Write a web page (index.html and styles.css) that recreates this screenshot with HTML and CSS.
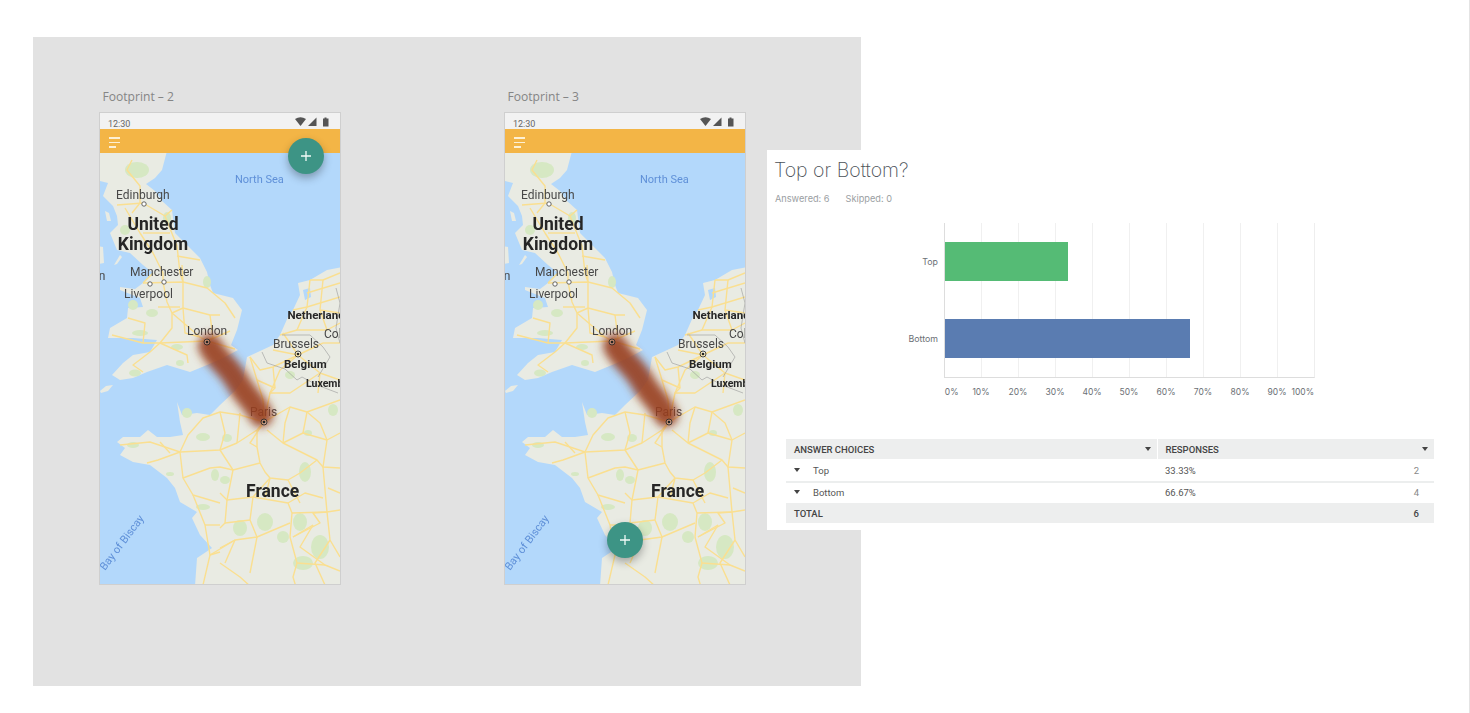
FILE: index.html
```html
<!DOCTYPE html>
<html lang="en">
<head>
    <meta charset="UTF-8">
    <meta name="viewport" content="width=device-width, initial-scale=1.0">
    <title>Footprint</title>
    <link rel="stylesheet" href="styles.css">
</head>
<body>
    <!-- map artwork, used by both phones -->
    <svg class="map-defs" aria-hidden="true">
        <defs>
            <filter id="trailBlur" x="-80%" y="-60%" width="260%" height="220%">
                <feGaussianBlur stdDeviation="4.5"/>
            </filter>
        </defs>
        <symbol id="map" viewBox="0 0 240 431">
            <rect class="sea" width="240" height="431"/>
            <g class="land">
                <!-- Britain -->
                <path d="M-2 -2 L67 -2 L62 17 L55 25 L46 31 L55 38 L62 48 L72 57 L75 80 L88 93 L100 105 L107 119 L110 132 L113 140 L133 145 L142 157 L137 177 L131 192 L138 197 L123 205 L107 212 L90 219 L67 212 L47 219 L33 225 L20 227 L12 222 L23 210 L33 202 L50 199 L57 187 L33 185 L8 185 L10 175 L27 165 L28 155 L43 154 L40 145 L20 137 L20 134 L35 136 L43 130 L53 120 L43 112 L30 100 L17 97 L10 80 L18 72 L17 63 L13 53 L3 43 L8 30 L0 28 Z"/>
                <path d="M-2 93 L3 94 L4 110 L-2 111 Z"/>
                <path d="M14 112 L20 102 L22 104 L17 111 Z"/>
                <path d="M5 58 L9 60 L11 68 L7 68 Z"/>
                <path d="M0 238 L6 233 L13 232 L8 238 L1 240 Z"/>
                <!-- Continent -->
                <path fill-rule="evenodd" d="M242 114 L227 117 L210 127 L198 130 L200 142 L193 157 L188 164 L180 182 L173 192 L147 204 L143 227 L135 238 L120 252 L110 262 L97 260 L82 262 L77 249 L80 269 L83 282 L70 284 L57 284 L48 277 L40 284 L23 284 L17 289 L25 295 L20 302 L33 309 L50 312 L67 325 L75 335 L80 349 L97 359 L92 365 L100 382 L112 395 L97 405 L95 433 L242 433 Z M203 137 L210 135 L211 144 L205 147 Z"/>
            </g>
            <g class="parks">
                <ellipse cx="37" cy="17" rx="12" ry="8"/>
                <ellipse cx="67" cy="65" rx="4" ry="6"/>
                <ellipse cx="25" cy="77" rx="5" ry="5"/>
                <ellipse cx="52" cy="160" rx="6" ry="4"/>
                <ellipse cx="33" cy="152" rx="5" ry="5"/>
                <ellipse cx="40" cy="180" rx="8" ry="3"/>
                <ellipse cx="107" cy="129" rx="4" ry="6"/>
                <ellipse cx="35" cy="220" rx="6" ry="3.5"/>
                <ellipse cx="80" cy="210" rx="4" ry="3"/>
                <ellipse cx="77" cy="194" rx="6" ry="3"/>
                <ellipse cx="205" cy="319" rx="6" ry="10"/>
                <ellipse cx="140" cy="375" rx="7" ry="8"/>
                <ellipse cx="165" cy="369" rx="8" ry="9"/>
                <ellipse cx="200" cy="369" rx="7" ry="9"/>
                <ellipse cx="183" cy="384" rx="6" ry="6"/>
                <ellipse cx="220" cy="394" rx="9" ry="12"/>
                <ellipse cx="203" cy="410" rx="10" ry="7"/>
                <ellipse cx="125" cy="327" rx="5" ry="4"/>
                <ellipse cx="208" cy="280" rx="4" ry="3"/>
                <ellipse cx="233" cy="257" rx="5" ry="6"/>
                <ellipse cx="127" cy="285" rx="5" ry="4"/>
                <ellipse cx="103" cy="284" rx="7" ry="4"/>
                <ellipse cx="115" cy="322" rx="4" ry="6"/>
                <ellipse cx="87" cy="260" rx="5" ry="5"/>
                <ellipse cx="103" cy="354" rx="7" ry="3"/>
                <ellipse cx="33" cy="292" rx="6" ry="3"/>
                <ellipse cx="70" cy="321" rx="4" ry="2"/>
                <ellipse cx="190" cy="222" rx="5" ry="4"/>
            </g>
            <g class="roads">
                <!-- Britain -->
                <path d="M32 7 L27 17 L40 33 L40 50"/>
                <path d="M17 52 L43 50 L65 63 L77 93 L80 120 L83 129 L83 155 L72 160"/>
                <path d="M25 55 L40 80 L53 100 L63 120 L63 129 L67 149 L72 160 L72 175 L60 190"/>
                <path d="M43 80 L70 80"/>
                <path d="M77 103 L100 107"/>
                <path d="M43 130 L83 129 L107 135"/>
                <path d="M58 154 L80 154"/>
                <path d="M83 155 L110 162 L120 162"/>
                <path d="M72 160 L100 184 L107 188"/>
                <path d="M12 182 L43 190 L60 190 L107 188"/>
                <path d="M60 190 L87 202 L88 210"/>
                <path d="M60 190 L50 199 L33 212 L43 219"/>
                <path d="M107 188 L130 178"/>
                <path d="M107 188 L135 196"/>
                <path d="M82 112 L83 129"/>
                <path d="M107 135 L125 150 L135 165"/>
                <path d="M40 50 L32 60"/>
                <path d="M65 63 L72 57"/>
                <path d="M53 120 L43 130"/>
                <path d="M83 155 L85 180 L100 184"/>
                <path d="M110 162 L113 185 L107 188"/>
                <path d="M43 190 L45 170 L28 165"/>
                <!-- Low countries -->
                <path d="M210 127 L207 154 L197 177"/>
                <path d="M207 140 L240 130"/>
                <path d="M207 154 L240 144"/>
                <path d="M223 127 L220 157 L227 177"/>
                <path d="M180 182 L197 177 L227 177 L240 170"/>
                <path d="M173 197 L198 202 L183 180"/>
                <path d="M198 202 L173 214 L160 217 L150 204"/>
                <path d="M198 202 L223 190"/>
                <path d="M198 202 L220 220 L240 227"/>
                <path d="M198 202 L180 217 L170 240 L164 269"/>
                <path d="M150 204 L157 227 L163 247 L164 269"/>
                <path d="M193 157 L207 154"/>
                <path d="M210 127 L223 127 L240 120"/>
                <path d="M220 157 L240 160"/>
                <path d="M223 190 L240 190"/>
                <path d="M220 220 L218 240"/>
                <path d="M173 214 L175 235 L170 240 L190 240 L220 220"/>
                <path d="M157 227 L175 235"/>
                <!-- West of France -->
                <path d="M80 299 L50 289 L20 292"/>
                <path d="M80 299 L120 297 L137 290 L157 277 L164 269"/>
                <path d="M80 299 L58 307 L47 310"/>
                <path d="M80 299 L83 325 L93 342 L120 350"/>
                <path d="M80 299 L88 282 L103 265 L120 259 L140 262 L164 269"/>
                <path d="M83 325 L110 315 L120 314 L133 317"/>
                <path d="M93 342 L105 372 L110 402 L103 432"/>
                <path d="M110 402 L120 399"/>
                <path d="M105 372 L120 372"/>
                <path d="M60 289 L70 300"/>
                <path d="M120 259 L125 280 L120 297"/>
                <path d="M137 290 L140 260"/>
                <!-- Centre and east of France -->
                <path d="M157 277 L157 294 L160 310 L165 319 L170 325 L188 327"/>
                <path d="M120 297 L133 317 L160 310"/>
                <path d="M133 317 L127 347 L125 370 L120 375"/>
                <path d="M170 325 L153 344 L150 367 L157 384 L135 387 L120 395"/>
                <path d="M153 344 L188 350 L192 360 L190 384 L197 410 L193 424 L196 434"/>
                <path d="M157 384 L190 370"/>
                <path d="M192 360 L227 359 L240 357"/>
                <path d="M227 359 L213 360 L220 370 L193 384"/>
                <path d="M227 359 L223 314 L227 287 L240 280"/>
                <path d="M167 277 L183 290 L217 307 L223 314 L240 315"/>
                <path d="M183 290 L203 280 L227 287"/>
                <path d="M164 269 L190 254 L207 259 L240 247"/>
                <path d="M207 259 L203 280"/>
                <path d="M227 359 L230 387 L240 404"/>
                <path d="M213 372 L200 394 L225 412 L240 418"/>
                <path d="M120 410 L140 424 L150 433"/>
                <path d="M157 384 L150 420"/>
                <path d="M125 370 L150 367"/>
                <path d="M120 340 L127 347 L153 344"/>
                <path d="M170 325 L165 345"/>
                <path d="M188 327 L200 350"/>
                <path d="M188 350 L205 340 L223 345"/>
                <path d="M217 307 L200 320 L188 327"/>
                <path d="M227 287 L220 270 L207 259"/>
                <path d="M190 254 L185 270 L183 290"/>
                <path d="M164 269 L150 290 L157 294"/>
                <path d="M110 402 L135 387"/>
                <path d="M135 387 L125 410"/>
                <path d="M197 410 L225 412"/>
                <path d="M193 384 L213 372"/>
                <path d="M230 387 L215 410 L225 432"/>
                <path d="M240 340 L228 335"/>
            </g>
            <g class="borders">
                <path d="M162 199 L167 210 L185 216 L197 227 L202 224 L217 232 L238 240"/>
                <path d="M182 182 L197 182 L210 182 L223 194 L230 204 L224 214 L218 224"/>
                <path d="M236 135 L240 150 L236 175 L240 190"/>
            </g>
            <g class="labels">
                <text class="sea-label" x="135" y="30">North Sea</text>
                <text x="16" y="46">Edinburgh</text>
                <text class="country" x="53" y="77" text-anchor="middle">United</text>
                <text class="country" x="53" y="97" text-anchor="middle">Kingdom</text>
                <text x="30" y="123">Manchester</text>
                <text x="5.5" y="127" text-anchor="end">Dublin</text>
                <text x="24" y="145">Liverpool</text>
                <text x="87" y="182">London</text>
                <text class="region" x="187.5" y="165.5">Netherlands</text>
                <text x="224" y="185">Cologne</text>
                <text x="173" y="195">Brussels</text>
                <text class="region" x="184" y="215">Belgium</text>
                <text class="region small" x="206" y="234">Luxembourg</text>
                <text x="150" y="263">Paris</text>
                <text class="country" x="146" y="344">France</text>
                <text class="sea-label" transform="translate(5 418) rotate(-53)">Bay of Biscay</text>
            </g>
            <circle class="town" cx="44" cy="51" r="2.2"/>
            <circle class="town" cx="50" cy="131" r="2.2"/>
            <circle class="town" cx="64" cy="129" r="2.2"/>
            <path class="trail" d="M110 193 C116 206 128 212 137 228 S154 248 161 262" filter="url(#trailBlur)"/>
            <circle class="city" cx="107" cy="189" r="3"/>
            <circle class="city-dot" cx="107" cy="189" r="1.3"/>
            <circle class="city" cx="164" cy="269" r="3"/>
            <circle class="city-dot" cx="164" cy="269" r="1.3"/>
            <circle class="city" cx="198" cy="201" r="3"/>
            <circle class="city-dot" cx="198" cy="201" r="1.3"/>
        </symbol>
    </svg>

    <div class="artboard">
        <div class="screen">
            <div class="screen-name">Footprint – 2</div>
            <div class="phone">
                <div class="status-bar">
                    <span class="clock">12:30</span>
                    <svg class="status-icons" width="36" height="10" viewBox="0 0 36 10">
                        <path d="M0 2 Q5.5 -1.5 11 2 L5.5 9 Z"/>
                        <path d="M13 9 L21.500 .5 V9 Z"/>
                        <path d="M28 1.500 H29.500 V.5 H31.500 V1.500 H33.500 V9.500 H28 Z"/>
                    </svg>
                </div>
                <div class="app-bar">
                    <div class="menu-icon"><i></i><i></i><i></i></div>
                </div>
                <svg class="map" viewBox="0 0 240 431"><use href="#map"/></svg>
                <button class="fab fab-top">
                    <svg width="12" height="12" viewBox="0 0 12 12"><path d="M6 1 V11 M1 6 H11"/></svg>
                </button>
            </div>
        </div>
        <div class="screen">
            <div class="screen-name">Footprint – 3</div>
            <div class="phone">
                <div class="status-bar">
                    <span class="clock">12:30</span>
                    <svg class="status-icons" width="36" height="10" viewBox="0 0 36 10">
                        <path d="M0 2 Q5.5 -1.5 11 2 L5.5 9 Z"/>
                        <path d="M13 9 L21.500 .5 V9 Z"/>
                        <path d="M28 1.500 H29.500 V.5 H31.500 V1.500 H33.500 V9.500 H28 Z"/>
                    </svg>
                </div>
                <div class="app-bar">
                    <div class="menu-icon"><i></i><i></i><i></i></div>
                </div>
                <svg class="map" viewBox="0 0 240 431"><use href="#map"/></svg>
                <button class="fab fab-bottom">
                    <svg width="12" height="12" viewBox="0 0 12 12"><path d="M6 1 V11 M1 6 H11"/></svg>
                </button>
            </div>
        </div>
    </div>

    <div class="survey-card">
        <h2 class="survey-title">Top or Bottom?</h2>
        <div class="survey-meta"><span>Answered: 6</span><span>Skipped: 0</span></div>

        <div class="chart">
            <div class="chart-labels">
                <div>Top</div>
                <div>Bottom</div>
            </div>
            <div class="chart-plot">
                <div class="band"><div class="bar bar-green" style="width: 33.33%"></div></div>
                <div class="band"><div class="bar bar-blue" style="width: 66.67%"></div></div>
            </div>
        </div>
        <div class="chart-ticks">
            <span>0%</span><span>10%</span><span>20%</span><span>30%</span><span>40%</span><span>50%</span><span>60%</span><span>70%</span><span>80%</span><span>90%</span><span>100%</span>
        </div>

        <table class="answers">
            <tr class="head">
                <th class="col-choice">ANSWER CHOICES<i class="caret"></i></th>
                <th colspan="2">RESPONSES<i class="caret"></i></th>
            </tr>
            <tr class="row row-first">
                <td><i class="caret caret-row"></i>Top</td>
                <td>33.33%</td>
                <td class="count">2</td>
            </tr>
            <tr class="row">
                <td><i class="caret caret-row"></i>Bottom</td>
                <td>66.67%</td>
                <td class="count">4</td>
            </tr>
            <tr class="total">
                <td colspan="2">TOTAL</td>
                <td class="count">6</td>
            </tr>
        </table>
    </div>

    <div class="page-edge"></div>
</body>
</html>
```

FILE: styles.css
```css
body {
    margin: 0;
    height: 713px;
    background: white;
    font-family: Roboto, Arial, sans-serif;
    overflow: hidden;
}
.map-defs {
    position: absolute;
    width: 0;
    height: 0;
}
.artboard {
    box-sizing: border-box;
    display: flex;
    gap: 163px;
    width: 828px;
    height: 649px;
    margin: 37px 0 0 33px;
    padding: 52px 0 0 66px;
    background: #e2e2e2;
    position: absolute;
}
.screen-name {
    height: 23px;
    padding-left: 3.5px;
    font-family: "Open Sans", sans-serif;
    font-size: 12.1px;
    line-height: 16px;
    color: #858585;
}
.phone {
    position: relative;
    width: 240px;
    height: 471px;
    border: 1px solid #cfcfcf;
    background: white;
}
.status-bar {
    display: flex;
    justify-content: space-between;
    align-items: center;
    height: 16px;
    padding: 0 9px 0 8px;
    background: #f2f2f2;
}
.clock {
    font-size: 9px;
    color: #666;
    padding-top: 5px;
}
.status-icons {
    fill: #555;
    margin-top: 1px;
}
.app-bar {
    height: 24px;
    background: #f3b546;
}
.menu-icon {
    display: flex;
    flex-direction: column;
    gap: 3px;
    width: 11px;
    padding: 8px 0 0 9px;
}
.menu-icon i {
    display: block;
    height: 1.5px;
    background: #fdf0d4;
}
.menu-icon i:last-child {
    width: 7px;
}
.map {
    display: block;
    width: 240px;
    height: 431px;
    filter: blur(0.35px);
}
.fab {
    position: absolute;
    width: 36px;
    height: 36px;
    padding: 0;
    display: flex;
    align-items: center;
    justify-content: center;
    border: none;
    border-radius: 50%;
    background: #3d9485;
    box-shadow: 0 4px 8px rgba(0, 0, 0, 0.3);
}
.fab svg {
    stroke: #f2fbf8;
    stroke-width: 1.3;
    fill: none;
}
.fab-top {
    left: 188px;
    top: 25px;
}
.fab-bottom {
    left: 102px;
    top: 409px;
}

/* map artwork */
.sea {
    fill: #b3d8fb;
}
.land {
    fill: #e9ebe3;
}
.parks {
    fill: #d6e8c3;
}
.roads {
    fill: none;
    stroke: #fadf90;
    stroke-width: 1.4;
    stroke-linejoin: round;
}
.borders {
    fill: none;
    stroke: #999;
    stroke-width: 0.6;
}
.labels {
    font-family: Roboto, sans-serif;
    font-size: 12px;
    fill: #484848;
}
.labels .country {
    font-size: 17.5px;
    font-weight: 700;
    fill: #262626;
}
.labels .region {
    font-size: 11.5px;
    font-weight: 700;
    fill: #262626;
}
.labels .small {
    font-size: 10.5px;
}
.labels .sea-label {
    font-size: 11px;
    fill: #5f90d8;
}
.town {
    fill: #fff;
    stroke: #555;
    stroke-width: 0.9;
}
.trail {
    fill: none;
    stroke: #983f1e;
    stroke-opacity: 0.9;
    stroke-width: 24;
    stroke-linecap: round;
}
.city {
    fill: #fff;
    fill-opacity: 0.25;
    stroke: #222;
    stroke-width: 0.8;
}
.city-dot {
    fill: #222;
}

/* survey results */
.survey-card {
    position: absolute;
    left: 767px;
    top: 150px;
    box-sizing: border-box;
    width: 680px;
    height: 380px;
    padding: 8px 0 0 8px;
    background: white;
    color: #6b7075;
}
.survey-title {
    margin: 0 0 0 -1px;
    font-family: Inter, sans-serif;
    font-size: 19.5px;
    font-weight: 200;
    line-height: 24px;
    color: #4b5157;
}
.survey-meta {
    display: flex;
    gap: 16px;
    margin-top: 11px;
    font-family: Inter, sans-serif;
    font-size: 9.2px;
    line-height: 12px;
    color: #9a9ea2;
}
.chart {
    display: flex;
    margin-top: 18px;
}
.chart-labels {
    width: 163px;
    padding-right: 6px;
    font-family: Inter, sans-serif;
    font-size: 8.8px;
    text-align: right;
}
.chart-labels div {
    height: 77px;
    line-height: 77px;
}
.chart-plot {
    box-sizing: border-box;
    width: 371px;
    height: 155px;
    border-left: 1px solid #ddd;
    border-right: 1px solid #eee;
    border-bottom: 1px solid #ddd;
    background-image: repeating-linear-gradient(to right, transparent 0 36px, #f0f0f0 36px 37px);
}
.band {
    display: flex;
    align-items: center;
    height: 77px;
    padding-right: 1px;
}
.bar {
    height: 38.5px;
}
.bar-green {
    background: #55bb75;
}
.bar-blue {
    background: #5a7cb1;
}
.chart-ticks {
    display: flex;
    margin: 7px 0 0 150.5px;
    font-family: Inter, sans-serif;
    font-size: 8.5px;
    line-height: 14px;
}
.chart-ticks span {
    width: 37px;
    text-align: center;
}
.chart-ticks span:first-child {
    text-align: right;
    padding-right: 4px;
    width: 33px;
}
.chart-ticks span:last-child {
    width: 32.5px;
    margin-left: -14px;
    text-align: right;
}
.answers {
    width: 648px;
    margin: 40px 0 0 11px;
    border-collapse: collapse;
    table-layout: fixed;
    font-size: 9.5px;
    color: #555;
}
.answers th,
.answers td {
    box-sizing: border-box;
    height: 20px;
    padding: 0 8px;
    text-align: left;
}
.answers .head th {
    position: relative;
    font-size: 9.5px;
    font-weight: 500;
    background: #edeeee;
    color: #444;
}
.answers .col-choice {
    width: 371px;
    border-right: 1px solid white;
}
.answers .row td {
    height: 21px;
    padding-bottom: 2px;
}
.answers .row-first td {
    height: 23px;
    padding-bottom: 0;
    border-bottom: 2px solid #eceeee;
}
.answers .total td {
    font-size: 9.5px;
    font-weight: 500;
    background: #edeeee;
    color: #444;
}
.answers .count {
    width: 60px;
    padding-right: 15px;
    text-align: right;
    color: #888;
}
.answers .total .count {
    color: #444;
}
.caret {
    position: absolute;
    right: 6px;
    top: 8px;
    border-left: 3.5px solid transparent;
    border-right: 3.5px solid transparent;
    border-top: 4px solid #444;
}
.caret-row {
    position: static;
    display: inline-block;
    margin: 0 13px 1px 0;
    vertical-align: middle;
}
.page-edge {
    position: absolute;
    left: 1469px;
    top: 0;
    width: 1px;
    height: 713px;
    background: #e4e4e4;
}
```
